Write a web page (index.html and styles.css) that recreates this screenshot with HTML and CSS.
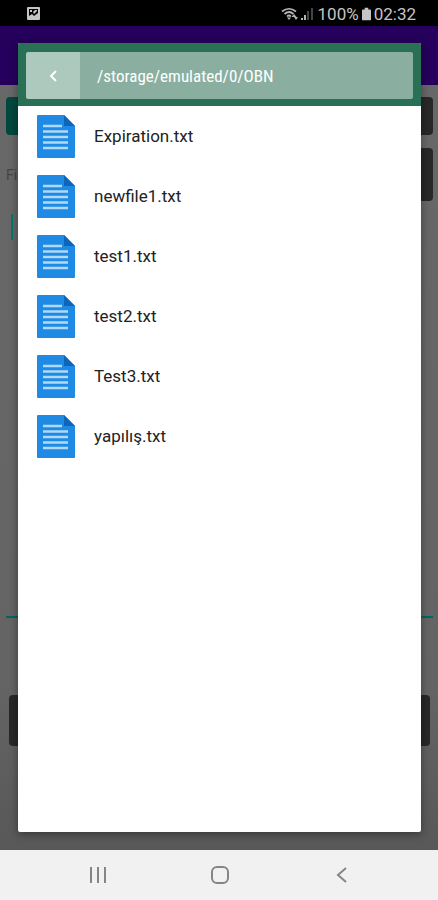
FILE: index.html
```html
<!DOCTYPE html>
<html lang="en">
<head>
  <meta charset="UTF-8">
  <meta name="viewport" content="width=device-width, initial-scale=1.0">
  <title>Open file</title>
  <link rel="stylesheet" href="styles.css">
</head>
<body>
  <svg class="defs" aria-hidden="true">
    <symbol id="file" viewBox="0 0 38 43">
      <path d="M1 0h26l11 11v31a1 1 0 0 1-1 1H1a1 1 0 0 1-1-1V1a1 1 0 0 1 1-1z" fill="#1e8ae4"/>
      <path d="M27 0l11 11H27z" fill="#0d66ba"/>
      <path d="M6 11h19M6 16.500h25M6 22h25M6 27.500h25M6 33h25" stroke="#b0d9f8" stroke-width="2.400"/>
    </symbol>
  </svg>

  <header class="statusbar">
    <svg class="picture" viewBox="0 0 13 13" aria-hidden="true">
      <path fill-rule="evenodd" d="M1 0h11a1 1 0 0 1 1 1v11a1 1 0 0 1-1 1H1a1 1 0 0 1-1-1V1a1 1 0 0 1 1-1zM2 2v7l3-2 2 2 4-3V2z" fill="#c4c4c4"/>
      <path d="M3 3h2v2H3zM6 5l2-2h2v1L7 7z" fill="#c4c4c4"/>
    </svg>
    <div class="status">
      <svg class="signal" viewBox="0 0 34 14" aria-hidden="true">
        <path d="M1 4.500Q8-1 15 4.500M3.500 7Q8 3 12.500 7M6 9.500Q8 7.500 10 9.500" fill="none" stroke="#b4b4b4" stroke-width="1.700"/>
        <path d="M8 13l-2-2.500h4zM13 7l2.500 3h-5zM15 13l2-3h-4z" fill="#b4b4b4"/>
        <path d="M20 11h2v2h-2zM23 8h2v5h-2z" fill="#b4b4b4"/>
        <path d="M26 4h2v9h-2zM30 1h2v12h-2z" fill="#444"/>
      </svg>
      <span>100%</span>
      <svg class="battery" viewBox="0 0 10 14" aria-hidden="true">
        <path d="M3 0h4v2h2a1 1 0 0 1 1 1v10a1 1 0 0 1-1 1H1a1 1 0 0 1-1-1V3a1 1 0 0 1 1-1h2z" fill="#c4c4c4"/>
      </svg>
      <span>02:32</span>
    </div>
  </header>

  <main class="screen">
    <div class="appbar"></div>
    <form class="editor" action="#">
      <div class="row">
        <button type="button" class="btn teal" aria-label="New"></button>
        <button type="button" class="btn" aria-label="Open"></button>
      </div>
      <div class="row">
        <label for="note">File</label>
        <button type="button" class="btn tall" aria-label="Save"></button>
      </div>
      <textarea id="note"></textarea>
      <button type="button" class="btn wide" aria-label="Close"></button>
    </form>

    <div class="shade">
      <section class="dialog" role="dialog" aria-label="Choose a file">
        <div class="pathbar">
          <button type="button" class="back" aria-label="Back">
            <svg viewBox="0 0 8 12" aria-hidden="true"><path d="M7 1L2 6l5 5" fill="none" stroke="#fff" stroke-width="2"/></svg>
          </button>
          <span class="path">/storage/emulated/0/OBN</span>
        </div>
        <ul class="files">
          <li><a href="#"><svg><use href="#file"/></svg>Expiration.txt</a></li>
          <li><a href="#"><svg><use href="#file"/></svg>newfile1.txt</a></li>
          <li><a href="#"><svg><use href="#file"/></svg>test1.txt</a></li>
          <li><a href="#"><svg><use href="#file"/></svg>test2.txt</a></li>
          <li><a href="#"><svg><use href="#file"/></svg>Test3.txt</a></li>
          <li><a href="#"><svg><use href="#file"/></svg>yapılış.txt</a></li>
        </ul>
      </section>
    </div>
  </main>

  <nav class="navbar">
    <button type="button" aria-label="Recent apps">
      <svg viewBox="0 0 18 18"><path d="M2 1v16M9 1v16M16 1v16"/></svg>
    </button>
    <button type="button" aria-label="Home">
      <svg viewBox="0 0 18 18"><rect x="1" y="1" width="16" height="16" rx="5"/></svg>
    </button>
    <button type="button" aria-label="Back">
      <svg viewBox="0 0 18 18"><path d="M13 2L5 9l8 7"/></svg>
    </button>
  </nav>
</body>
</html>
```
FILE: styles.css
```css
*{
  box-sizing: border-box;
}
body{
  margin: 0;
  min-height: 100vh;
  display: flex;
  flex-direction: column;
  font-family: Roboto, "Noto Sans", sans-serif;
  background-color: #f1f1f1;
}
button{
  border: 0;
  padding: 0;
}
.defs{
  display: none;
}

/* status bar */
.statusbar{
  height: 26px;
  padding: 1px 22px 0 27px;
  display: flex;
  align-items: center;
  justify-content: space-between;
  background-color: #000;
  color: #c4c4c4;
  font-size: 17px;
}
.picture{
  width: 13px;
  height: 13px;
}
.status{
  display: flex;
  align-items: center;
  gap: 3px;
}
.signal{
  width: 34px;
  height: 14px;
}
.battery{
  width: 9px;
  height: 14px;
}

/* editor behind the dialog */
.screen{
  position: relative;
  flex: 1;
  display: flex;
  flex-direction: column;
  background: linear-gradient(#686868, #646464 80%, #585858);
}
.appbar{
  height: 59px;
  background-color: #25005c;
}
.editor{
  flex: 1;
  display: flex;
  flex-direction: column;
  gap: 13px;
  padding: 12px 5px 104px 6px;
}
.row{
  display: flex;
  justify-content: space-between;
  align-items: center;
}
.row label{
  color: #444;
  font-size: 14px;
}
.btn{
  width: 80px;
  height: 38px;
  border-radius: 4px;
  background-color: #282828;
}
.btn.teal{
  background-color: #00483f;
}
.btn.tall{
  height: 53px;
}
.btn.wide{
  width: auto;
  height: 51px;
  margin: 64px 3px 0;
}
textarea{
  flex: 1;
  border: 0;
  border-bottom: 2px solid #00695c;
  resize: none;
  background: linear-gradient(#007a6c, #007a6c) 5px 0 / 2px 26px no-repeat;
}

/* file dialog */
.shade{
  position: absolute;
  inset: 0;
  display: flex;
  padding: 17px 17px 18px 18px;
}
.dialog{
  flex: 1;
  overflow: hidden;
  border-radius: 2px;
  background-color: #fff;
  box-shadow: 0 2px 8px rgba(0, 0, 0, .4);
}
.pathbar{
  height: 63px;
  padding: 9px 8px 7px;
  display: flex;
  background-color: #2a7056;
}
.back{
  width: 54px;
  border-radius: 2px 0 0 2px;
  background-color: #adc8bd;
}
.back svg{
  width: 8px;
  height: 12px;
  vertical-align: middle;
}
.path{
  flex: 1;
  display: flex;
  align-items: center;
  padding-left: 17px;
  border-radius: 0 2px 2px 0;
  background-color: #8aafa1;
  color: #fff;
  font-family: "Roboto Condensed", Roboto, sans-serif;
  font-size: 17px;
}
.files{
  margin: 0;
  padding: 0;
  list-style: none;
}
.files a{
  height: 60px;
  padding-left: 19px;
  display: flex;
  align-items: center;
  gap: 19px;
  color: #222;
  font-size: 17px;
  text-decoration: none;
}
.files svg{
  width: 38px;
  height: 43px;
}

/* navigation bar */
.navbar{
  height: 50px;
  padding: 0 35px 0 37px;
  display: flex;
  background-color: #f1f1f1;
}
.navbar button{
  flex: 1;
  background: none;
}
.navbar svg{
  width: 18px;
  height: 18px;
  vertical-align: middle;
  fill: none;
  stroke: #858585;
  stroke-width: 2;
}
```
